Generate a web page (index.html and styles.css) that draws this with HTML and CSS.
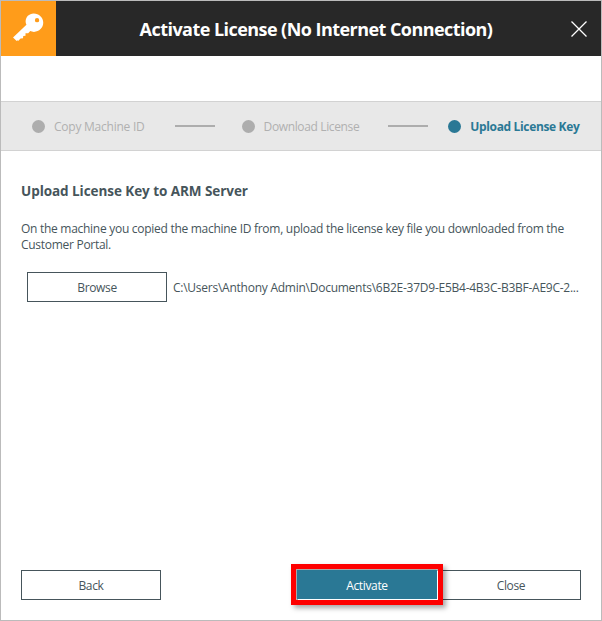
FILE: index.html
```html
<!DOCTYPE html>
<html lang="en">
<head>
    <meta charset="UTF-8">
    <title>Activate License</title>
    <link rel="stylesheet" href="styles.css">
</head>
<body>
    <div class="window">
        <!-- Title bar -->
        <div class="titlebar">
            <div class="key-box">
                <svg width="33" height="33" viewBox="0 0 32 32">
                    <path fill="#fff" fill-rule="evenodd" d="M21 1.500c5.200 0 9.300 4 9.300 8.800 0 5-4 9-9 9-1.300 0-2.600-.3-3.600-.8l-2 2.200h-2.600v2.400l-2.200.2-.2 2.200-2.400.3-2.400 2.200-.7-.6-.7.600L1 24.700 14 12.300c-.6-1-.8-2.100-.8-3 0-4.300 3.300-7.800 7.800-7.800zM24.300 5.800a2.100 2.100 0 1 0 0 4.200 2.100 2.100 0 0 0 0-4.200z"/>
                </svg>
            </div>
            <div class="title">Activate License (No Internet Connection)</div>
            <svg class="close-x" width="16" height="16" viewBox="0 0 16 16">
                <path d="M.5.500 15.500 15.500M15.500.500.500 15.500" stroke="#fff" stroke-width="1.300" fill="none"/>
            </svg>
        </div>

        <!-- Steps -->
        <div class="steps">
            <div class="step"><span class="dot"></span><span class="step-label">Copy Machine ID</span></div>
            <div class="step-line"></div>
            <div class="step step-download"><span class="dot"></span><span class="step-label">Download License</span></div>
            <div class="step-line line-2"></div>
            <div class="step active"><span class="dot"></span><span class="step-label">Upload License Key</span></div>
        </div>

        <!-- Content -->
        <div class="content">
            <h2>Upload License Key to ARM Server</h2>
            <p>On the machine you copied the machine ID from, upload the license key file you downloaded from the Customer Portal.</p>
            <div class="file-row">
                <button class="btn">Browse</button>
                <span class="file-path">C:\Users\Anthony Admin\Documents\6B2E-37D9-E5B4-4B3C-B3BF-AE9C-2...</span>
            </div>
        </div>

        <!-- Footer buttons -->
        <div class="footer">
            <button class="btn">Back</button>
            <div class="footer-right">
                <button class="btn btn-primary">Activate</button>
                <button class="btn">Close</button>
            </div>
        </div>
    </div>
</body>
</html>
```

FILE: styles.css
```css
/* General Styles */
body {
    margin: 0;
    background: #fff;
    font-family: 'Open Sans', 'Noto Sans', sans-serif;
    font-size: 12px;
    color: #46555b;
}

/* Window */
.window {
    width: 602px;
    height: 621px;
    box-sizing: border-box;
    border: 1px solid #bbb;
    display: flex;
    flex-direction: column;
}

/* Title bar */
.titlebar {
    height: 55px;
    background: #282828;
    display: flex;
    align-items: center;
    flex-shrink: 0;
}
.key-box {
    width: 55px;
    height: 55px;
    background: #ff9c1a;
    display: flex;
    align-items: center;
    justify-content: center;
}
.title {
    flex: 1;
    text-align: center;
    color: #fff;
    font-size: 18px;
    font-weight: 700;
    letter-spacing: -0.55px;
    padding-left: 5px;
    padding-top: 1px;
}
.close-x {
    margin: 0 14px 0 0;
}

/* Steps */
.steps {
    margin-top: 45px;
    height: 48px;
    background: #e8e8e8;
    border-top: 1px solid #d2d2d2;
    border-bottom: 1px solid #d2d2d2;
    display: flex;
    align-items: center;
    padding-left: 31px;
    flex-shrink: 0;
}
.step {
    display: flex;
    align-items: center;
    color: #b0b0b0;
    letter-spacing: -0.24px;
}
.step-download {
    letter-spacing: -0.36px;
}
.dot {
    width: 13px;
    height: 13px;
    border-radius: 50%;
    background: #adadad;
    margin-right: 9px;
}
.step-line {
    width: 40px;
    height: 2px;
    background: #adadad;
    margin: -1px 27px 0 30px;
}
.line-2 {
    margin: -1px 20px 0 29px;
}
.step.active {
    color: #2a7895;
    font-weight: 700;
    letter-spacing: -0.35px;
}
.step.active .dot {
    background: #2a7895;
}

/* Content */
.content {
    flex: 1;
    padding: 0 20px;
}
.content h2 {
    margin: 31px 0 0;
    font-size: 13.5px;
    font-weight: 700;
    line-height: 18px;
    letter-spacing: -0.06px;
}
.content p {
    margin: 21px 0 0;
    line-height: 16px;
    letter-spacing: -0.28px;
}
.file-row {
    display: flex;
    align-items: center;
    margin: 19px 0 0 6px;
}
.file-path {
    margin-left: 6px;
    white-space: nowrap;
    letter-spacing: -0.25px;
}

/* Buttons */
.btn {
    width: 140px;
    height: 30px;
    box-sizing: border-box;
    background: #fff;
    border: 1px solid #46555b;
    color: #46555b;
    font-family: inherit;
    font-size: 12px;
    letter-spacing: -0.35px;
    padding: 0;
    flex-shrink: 0;
}
.btn-primary {
    height: 29px;
    padding-top: 1px;
    background: #2a7895;
    color: #fff;
    border: 1px solid #2a7895;
    outline: 5px solid #fe0000;
    outline-offset: 1px;
    box-shadow: 1px 1px 0 0 #fff, -1px -1px 0 0 #a8a8a8, 3px 3px 5px 6px rgba(0, 0, 0, 0.35);
    position: relative;
}

/* Footer */
.footer {
    display: flex;
    justify-content: space-between;
    padding: 0 20px 20px 20px;
    flex-shrink: 0;
}
.footer-right {
    display: flex;
    align-items: flex-start;
    gap: 4px;
}
```
